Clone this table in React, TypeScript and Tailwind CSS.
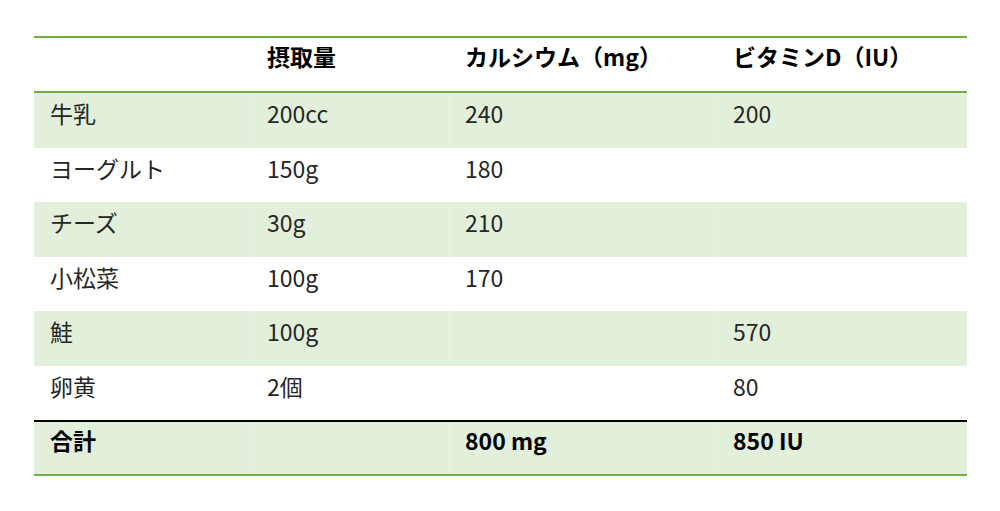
import React from "react";

const rows: { name: string; amount: string; ca: string; vd: string }[] = [
  { name: "牛乳", amount: "200cc", ca: "240", vd: "200" },
  { name: "ヨーグルト", amount: "150g", ca: "180", vd: "" },
  { name: "チーズ", amount: "30g", ca: "210", vd: "" },
  { name: "小松菜", amount: "100g", ca: "170", vd: "" },
  { name: "鮭", amount: "100g", ca: "", vd: "570" },
  { name: "卵黄", amount: "2個", ca: "", vd: "80" },
];

const grid = "grid grid-cols-[217px_199px_268px_249px]";

export default function App() {
  return (
    <div
      className="w-[1000px] h-[511px] bg-white pt-[36px] pl-[34px] text-[23px] leading-[34px] text-[#262626]"
      style={{ fontFamily: '"Noto Sans CJK JP", "Noto Sans", sans-serif' }}
    >
      <div className="w-[933px] border-t-[2.5px] border-solid border-t-[#70ad47]">
        <div className={`${grid} h-[55px] border-b-[2.5px] border-solid border-b-[#70ad47] font-bold text-black`}>
          <div className="pl-4 pt-[1px]"></div>
          <div className="pl-4 pt-[1px]">摂取量</div>
          <div className="pl-[15px] pt-[1px]">カルシウム（mg）</div>
          <div className="pl-[15px] pt-[1px]">ビタミンD（IU）</div>
        </div>
        {rows.map((r, i) => {
          const bg = i % 2 === 0 ? "bg-[#e2efda]" : "bg-white";
          return (
            <div key={r.name} className={`${grid} h-[54.5px] ${bg}`}>
              <div className="pl-4 pt-[3px] border-r border-white/25">{r.name}</div>
              <div className="pl-4 pt-[3px] border-r border-white/25">{r.amount}</div>
              <div className="pl-[15px] pt-[3px] border-r border-white/25">{r.ca}</div>
              <div className="pl-[15px] pt-[3px]">{r.vd}</div>
            </div>
          );
        })}
        <div className={`${grid} h-[56px] bg-[#e2efda] border-t-[2px] border-b-[2.5px] border-solid border-t-black border-b-[#70ad47] font-bold text-black`}>
          <div className="pl-4 pt-[1px] border-r border-white/25">合計</div>
          <div className="pl-4 pt-[1px] border-r border-white/25"></div>
          <div className="pl-[15px] pt-[1px] border-r border-white/25">800 mg</div>
          <div className="pl-[15px] pt-[1px]">850 IU</div>
        </div>
      </div>
    </div>
  );
}
